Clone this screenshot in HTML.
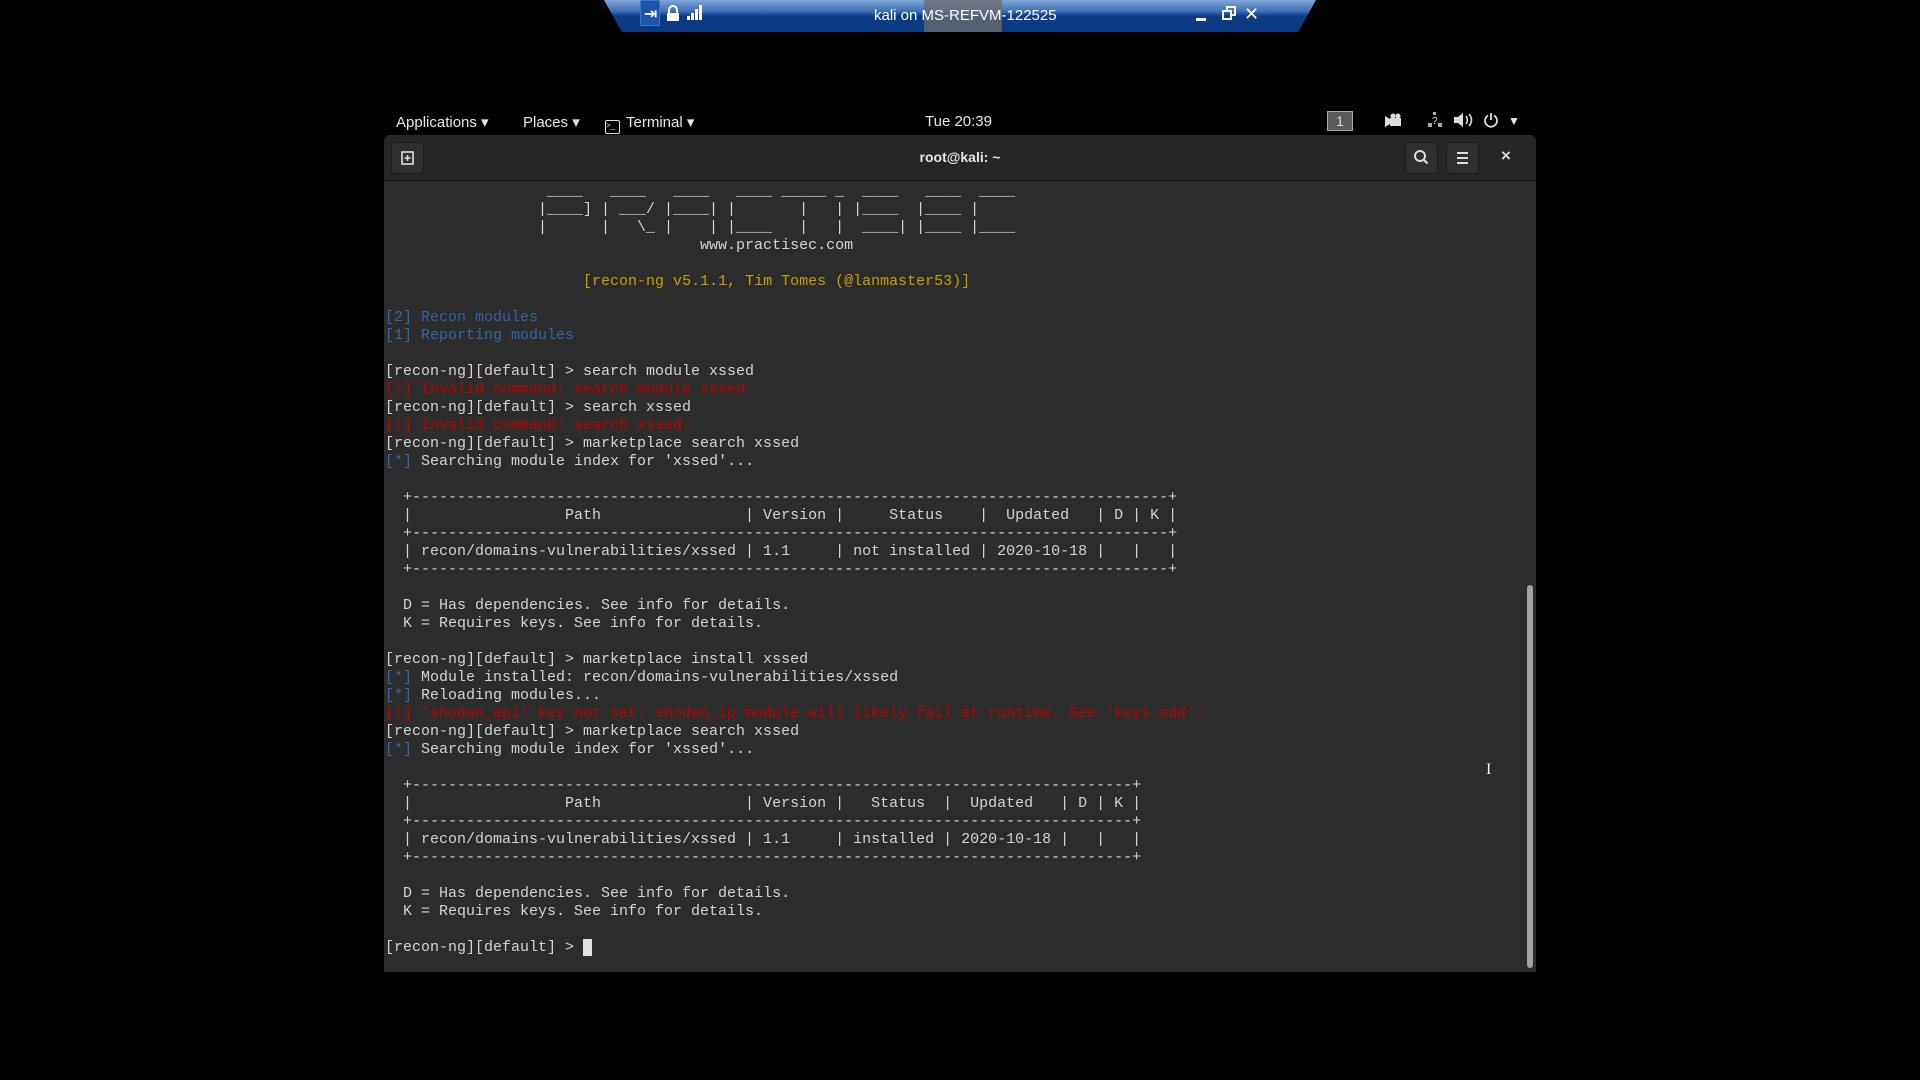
<!DOCTYPE html>
<html><head><meta charset="utf-8"><style>
*{margin:0;padding:0;box-sizing:border-box}
body{width:1920px;height:1080px;background:#000;position:relative;overflow:hidden;font-family:"Liberation Sans","DejaVu Sans",sans-serif}
.rdp{position:absolute;left:604px;top:0;width:712px;height:32px;background:linear-gradient(#7fa6d8 0%,#3f70b5 35%,#0b3b84 50%,#0a3a80 100%);clip-path:polygon(0 0,100% 0,97.5% 100%,2.5% 100%);color:#fff;font-size:15px}
.rdp .t{position:absolute;left:270px;top:7px}
.rdp .mag{position:absolute;left:320px;top:0;width:78px;height:32px;background:rgba(110,110,110,.75)}
.panel{position:absolute;top:113px;height:22px;color:#e8e8e8;font-size:15px}
.win{position:absolute;left:384px;top:135px;width:1152px;height:837px;background:#2c2c2c;border-radius:6px 6px 0 0;overflow:hidden}
.hdr{position:absolute;left:0;top:0;width:100%;height:46px;background:#262626;border-bottom:1px solid #141414}
.btn{position:absolute;top:7px;width:33px;height:32px;background:#2f2f2f;border:1px solid #1a1a1a;border-radius:4px}
.term{position:absolute;left:385px;top:183px;font-family:"Liberation Mono","DejaVu Sans Mono",monospace;font-size:15px;color:#d3d3d3}
.term div{height:18px;line-height:18px;white-space:pre}
.b{color:#3465a4}.r{color:#c00000}.y{color:#c4a000}
.cur{background:#e0e0e0;color:#2c2c2c}
</style></head><body>
<div class="rdp">
<div style="position:absolute;left:36px;top:0;width:20px;height:26px;background:#1d55a8;border:1px solid #3c78c8"></div>
<span style="position:absolute;left:40px;top:4px;font-weight:bold;font-size:16px">⇥</span>
<svg style="position:absolute;left:62px;top:5px" width="14" height="17"><path d="M3 8V5a4 4 0 0 1 8 0v3" fill="none" stroke="#fff" stroke-width="2"/><rect x="1" y="8" width="12" height="8" fill="#fff"/></svg>
<svg style="position:absolute;left:82px;top:5px" width="16" height="16"><rect x="1" y="11" width="3" height="4" fill="#fff"/><rect x="5" y="8" width="3" height="7" fill="#fff"/><rect x="9" y="4" width="3" height="11" fill="#fff"/><rect x="13" y="0" width="3" height="15" fill="#fff"/></svg>
<div class="mag"></div>
<span class="t">kali on MS-REFVM-122525</span>
<div style="position:absolute;left:592px;top:18px;width:10px;height:3px;background:#fff"></div>
<svg style="position:absolute;left:618px;top:6px" width="14" height="14"><rect x="1" y="5" width="8" height="8" fill="none" stroke="#fff" stroke-width="2"/><path d="M5 5V1h8v8h-4" fill="none" stroke="#fff" stroke-width="2"/></svg>
<span style="position:absolute;left:640px;top:4px;font-weight:bold;font-size:18px">✕</span>
</div>

<div class="panel" style="left:396px">Applications ▾</div>
<div class="panel" style="left:523px">Places ▾</div>
<div class="panel" style="left:605px"><span style="display:inline-block;width:15px;height:14px;border:1.5px solid #ddd;border-radius:2px;font-size:8px;line-height:10px;vertical-align:-1px;margin-right:6px">&gt;_</span>Terminal ▾</div>
<div class="panel" style="left:925px">Tue 20:39</div>
<div style="position:absolute;left:1327px;top:111px;width:26px;height:20px;background:#5a5a5a;border:1px solid #aaa;color:#ddd;font-size:14px;text-align:center;line-height:18px">1</div>
<svg style="position:absolute;left:1384px;top:113px" width="18" height="14"><path d="M1 3l5 3v5l-5 3z" fill="#ddd"/><rect x="6" y="5" width="11" height="8" fill="#ddd"/><circle cx="9" cy="3" r="2.5" fill="#ddd"/><circle cx="14" cy="3" r="2.5" fill="#ddd"/></svg>
<svg style="position:absolute;left:1427px;top:112px" width="16" height="16"><rect x="6" y="0" width="3" height="3" fill="#aaa"/><rect x="1" y="11" width="4" height="4" fill="#aaa"/><rect x="11" y="11" width="4" height="4" fill="#aaa"/><text x="5" y="12" font-size="10" fill="#ddd" font-family="Liberation Sans">?</text></svg>
<svg style="position:absolute;left:1453px;top:112px" width="20" height="16"><path d="M1 5h4l5-4v14l-5-4H1z" fill="#ddd"/><path d="M13 4q3 4 0 8M16 2q5 6 0 12" fill="none" stroke="#ddd" stroke-width="1.6"/></svg>
<svg style="position:absolute;left:1483px;top:112px" width="16" height="16"><path d="M5 3.5A6 6 0 1 0 11 3.5" fill="none" stroke="#ddd" stroke-width="1.8"/><path d="M8 1v7" stroke="#ddd" stroke-width="1.8"/></svg>
<div class="panel" style="left:1508px;font-size:12px;top:114px">▼</div>

<div class="win">
<div class="hdr">
<div class="btn" style="left:7px"><svg width="31" height="30"><rect x="10" y="9" width="11" height="12" fill="none" stroke="#ddd" stroke-width="1.6"/><path d="M15.5 12v6M12.5 15h6" stroke="#ddd" stroke-width="1.6"/></svg></div>
<div style="position:absolute;left:0;width:100%;top:14px;text-align:center;color:#e6e6e6;font-size:14px;font-weight:bold">root@kali: ~</div>
<div class="btn" style="left:1021px"><svg width="31" height="30"><circle cx="14" cy="13" r="5" fill="none" stroke="#ddd" stroke-width="2"/><path d="M17.5 16.5l4 4" stroke="#ddd" stroke-width="2.2"/></svg></div>
<div class="btn" style="left:1062px"><svg width="31" height="30"><path d="M10 10h11M10 15h11M10 20h11" stroke="#ddd" stroke-width="2"/></svg></div>
<div style="position:absolute;left:1117px;top:11px;color:#ddd;font-size:17px;font-weight:bold">×</div>
</div>
<div style="position:absolute;left:1143px;top:450px;width:6px;height:383px;background:#a3a3a3;border-radius:3px"></div>
</div>

<div class="term">
<div>                  ____   ____   ____   ____ _____ _  ____   ____  ____</div>
<div>                 |____] | ___/ |____| |       |   | |____  |____ |</div>
<div>                 |      |   \_ |    | |____   |   |  ____| |____ |____</div>
<div>                                   www.practisec.com</div>
<div> </div>
<div>                      <span class="y">[recon-ng v5.1.1, Tim Tomes (@lanmaster53)]</span></div>
<div> </div>
<div class="b">[2] Recon modules</div>
<div class="b">[1] Reporting modules</div>
<div> </div>
<div>[recon-ng][default] &gt; search module xssed</div>
<div class="r">[!] Invalid command: search module xssed.</div>
<div>[recon-ng][default] &gt; search xssed</div>
<div class="r">[!] Invalid command: search xssed.</div>
<div>[recon-ng][default] &gt; marketplace search xssed</div>
<div><span class="b">[*]</span> Searching module index for 'xssed'...</div>
<div> </div>
<div>  +------------------------------------------------------------------------------------+</div>
<div>  |                 Path                | Version |     Status    |  Updated   | D | K |</div>
<div>  +------------------------------------------------------------------------------------+</div>
<div>  | recon/domains-vulnerabilities/xssed | 1.1     | not installed | 2020-10-18 |   |   |</div>
<div>  +------------------------------------------------------------------------------------+</div>
<div> </div>
<div>  D = Has dependencies. See info for details.</div>
<div>  K = Requires keys. See info for details.</div>
<div> </div>
<div>[recon-ng][default] &gt; marketplace install xssed</div>
<div><span class="b">[*]</span> Module installed: recon/domains-vulnerabilities/xssed</div>
<div><span class="b">[*]</span> Reloading modules...</div>
<div class="r">[!] 'shodan_api' key not set. shodan_ip module will likely fail at runtime. See 'keys add'.</div>
<div>[recon-ng][default] &gt; marketplace search xssed</div>
<div><span class="b">[*]</span> Searching module index for 'xssed'...</div>
<div> </div>
<div>  +--------------------------------------------------------------------------------+</div>
<div>  |                 Path                | Version |   Status  |  Updated   | D | K |</div>
<div>  +--------------------------------------------------------------------------------+</div>
<div>  | recon/domains-vulnerabilities/xssed | 1.1     | installed | 2020-10-18 |   |   |</div>
<div>  +--------------------------------------------------------------------------------+</div>
<div> </div>
<div>  D = Has dependencies. See info for details.</div>
<div>  K = Requires keys. See info for details.</div>
<div> </div>
<div>[recon-ng][default] &gt; <span class="cur"> </span></div>
</div>
<div style="position:absolute;left:1486px;top:761px;color:#fff;font-size:16px;font-family:'Liberation Serif',serif;text-shadow:0 0 1px #000">I</div>
</body></html>
